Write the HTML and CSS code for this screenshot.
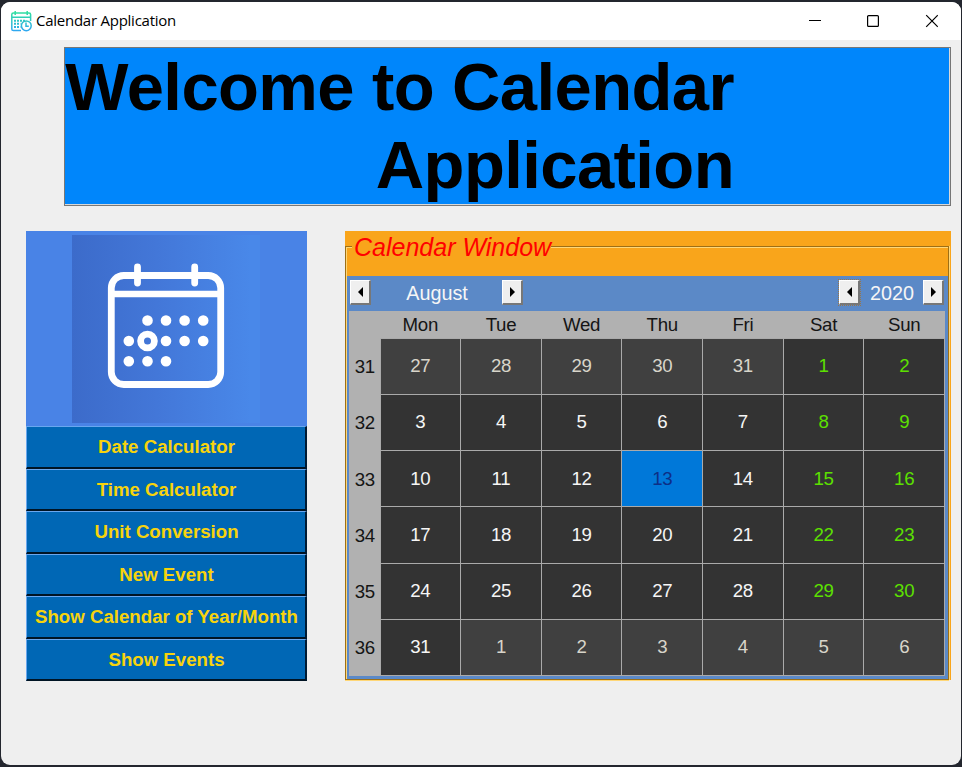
FILE: index.html
```html
<!DOCTYPE html>
<html lang="en">
<head>
<meta charset="utf-8">
<title>Calendar Application</title>
<link rel="stylesheet" href="styles.css">
</head>
<body>
<div class="window">
  <header class="titlebar">
    <svg class="app-icon" width="21" height="21" viewBox="0 0 21 21" fill="none">
      <defs><linearGradient id="mint" gradientUnits="userSpaceOnUse" x1="0" y1="0" x2="0" y2="21"><stop offset="0" stop-color="#2fe39a"/><stop offset="1" stop-color="#2fa4f6"/></linearGradient></defs>
      <g stroke="url(#mint)" stroke-width="1.5">
        <path d="M10 19.6H2.4Q.8 19.6.8 18V3.6Q.8 2 2.4 2H18Q19.6 2 19.6 3.6V10"/>
        <path d="M.8 6.2H19.6M4.2 0V4M16.2 0V4"/>
        <circle cx="15.3" cy="14.8" r="4.9"/>
        <path d="M15 11.6V15.2H17.8"/>
        <path stroke-width="2" stroke-dasharray="2 1" d="M3 9.7H14.5M3 12.8H9.4M3 15.9H9.4"/>
      </g>
    </svg>
    <span class="title">Calendar Application</span>
    <svg class="controls" width="130" height="16" viewBox="0 0 130 16" fill="none" stroke="#000" stroke-width="1.2">
      <path d="M1 7.5H13"/><rect x="59.6" y="2.6" width="10.8" height="10.8" rx="1"/><path d="M118.2 2.2l11.6 11.6M129.8 2.2L118.2 13.8"/>
    </svg>
  </header>
  <main class="content">
    <h1 class="banner"><span>Welcome to Calendar<br>Application</span></h1>
    <div class="columns">
      <nav class="sidebar">
        <div class="picture">
          <div class="tile">
            <svg width="188" height="188" viewBox="0 0 188 188" fill="none" stroke="#fff">
              <rect x="39.3" y="40.5" width="109.4" height="109" rx="12.5" stroke-width="6.8"/>
              <path stroke-width="6.6" d="M40 59H148"/>
              <path stroke-width="6.8" stroke-linecap="round" d="M65.5 32V48M122.7 32V48"/>
              <path stroke-width="10.6" stroke-linecap="round" d="M75.5 85.5h.01M94 85.5h.01M112.6 85.5h.01M131.2 85.5h.01M56.8 106h.01M94 106h.01M112.6 106h.01M131.2 106h.01M56.8 126.2h.01M75.5 126.2h.01M94 126.2h.01"/>
              <circle cx="75.5" cy="106" r="6.9" stroke-width="6.8"/>
            </svg>
          </div>
        </div>
        <button>Date Calculator</button>
        <button>Time Calculator</button>
        <button>Unit Conversion</button>
        <button>New Event</button>
        <button>Show Calendar of Year/Month</button>
        <button>Show Events</button>
      </nav>
      <section class="frame">
        <h2 class="legend"><span>Calendar Window</span></h2>
        <div class="well">
          <div class="calendar">
            <div class="picker">
              <button class="step left" aria-label="Previous month"></button>
              <span class="month">August</span>
              <button class="step right" aria-label="Next month"></button>
              <span class="space"></span>
              <button class="step left focus" aria-label="Previous year"></button>
              <span class="year">2020</span>
              <button class="step right" aria-label="Next year"></button>
            </div>
            <table class="grid">
              <colgroup><col class="weeks"><col><col><col><col><col><col><col></colgroup>
              <thead><tr><th></th><th>Mon</th><th>Tue</th><th>Wed</th><th>Thu</th><th>Fri</th><th>Sat</th><th>Sun</th></tr></thead>
              <tbody>
                <tr><th>31</th><td class="out">27</td><td class="out">28</td><td class="out">29</td><td class="out">30</td><td class="out">31</td><td class="off">1</td><td class="off">2</td></tr>
                <tr><th>32</th><td>3</td><td>4</td><td>5</td><td>6</td><td>7</td><td class="off">8</td><td class="off">9</td></tr>
                <tr><th>33</th><td>10</td><td>11</td><td>12</td><td class="today">13</td><td>14</td><td class="off">15</td><td class="off">16</td></tr>
                <tr><th>34</th><td>17</td><td>18</td><td>19</td><td>20</td><td>21</td><td class="off">22</td><td class="off">23</td></tr>
                <tr><th>35</th><td>24</td><td>25</td><td>26</td><td>27</td><td>28</td><td class="off">29</td><td class="off">30</td></tr>
                <tr><th>36</th><td>31</td><td class="out">1</td><td class="out">2</td><td class="out">3</td><td class="out">4</td><td class="out">5</td><td class="out">6</td></tr>
              </tbody>
            </table>
          </div>
        </div>
      </section>
    </div>
  </main>
</div>
</body>
</html>
```
FILE: styles.css
```css
* { box-sizing: border-box; }
body {
  margin: 0;
  height: 767px;
  padding: 2px 1px 2px;
  background: #23262e;
  font-family: "Liberation Sans", Arial, sans-serif;
  overflow: hidden;
}
.window {
  height: 763px;
  border-radius: 9px;
  overflow: hidden;
  background: #efefef;
}
.titlebar {
  height: 38px;
  background: #fff;
  display: flex;
  align-items: center;
  padding: 0 23px 0 10px;
}
.title {
  margin: -2px 0 0 4px;
  font: 15px/20px "Open Sans", "Noto Sans", sans-serif;
  letter-spacing: -0.25px;
  color: #000;
}
.controls { margin-left: auto; }
.content { padding: 7px 10px 0 25px; }
.banner {
  margin: 0 0 25px 38px;
  width: 887px;
  height: 159px;
  border: 1px solid #777;
  box-shadow: inset -1px -1px #d8d8d8;
  background: #0086fb;
  font-weight: bold;
  font-size: 67px;
  letter-spacing: -0.6px;
  line-height: 77.5px;
  color: #000;
}
.banner span { display: block; width: 669px; text-align: right; white-space: nowrap; }
.columns { display: flex; align-items: flex-start; }
.sidebar {
  width: 281px;
  height: 450px;
  display: grid;
  grid-template-rows: 195px repeat(6, 42.5px);
}
.picture { background: #4983e6; padding: 4px 46px; }
.tile { width: 188px; height: 188px; background: linear-gradient(90deg, #3c6bca, #4377d8 45%, #4988e9 95%); }
.tile svg { display: block; }
.sidebar button {
  margin: 0;
  padding: 1px 0 0 1px;
  border: solid;
  border-width: 1px 2px 2px 1px;
  border-color: #69a7ef #001b33 #001424 #69a7ef;
  background: #0067b5;
  color: #f7d30c;
  font: bold 18.67px/20px "Liberation Sans", Arial, sans-serif;
  white-space: nowrap;
}
.frame {
  margin-left: 38px;
  width: 606px;
  height: 450px;
  background: linear-gradient(#f9a51b, #f9a51b) 0 0 / 606px 449px no-repeat;
  padding-top: 15px;
}
.well {
  width: 604px;
  height: 434px;
  border: 1px solid #9d6f16;
  box-shadow: inset 1px 1px #ffd777, 0 1px #ffd777, 1px 0 #ffd777;
  padding: 29px 0 0 1px;
}
.legend {
  margin: -15px 0 -15px 7px;
  height: 30px;
  font: italic 25px/32px "Liberation Sans", Arial, sans-serif;
  color: #f00;
  position: relative;
}
.legend span { background: #f9a51b; padding: 0 0 0 2px; display: inline-block; height: 30px; }
.calendar { width: 601px; height: 403px; background: #5b89c7; padding: 0 3px 3px 2px; }
.picker { height: 35px; display: flex; align-items: center; color: #f6f6f6; font-size: 19.8px; padding: 0 1px; }
.month { width: 131px; text-align: center; padding-left: 1px; }
.year { width: 63px; text-align: center; padding-left: 1px; }
.space { flex: 1; }
.step {
  width: 21px;
  height: 25px;
  margin-top: -2px;
  padding: 0;
  border: solid;
  border-width: 1px 2px 2px 1px;
  border-color: #fff #777 #777 #fff;
  background: #efefef;
  display: flex;
  align-items: center;
  justify-content: center;
}
.step::before { content: ""; border: 5px solid transparent; }
.left::before { border-right-color: #000; border-left-width: 0; }
.right::before { border-left-color: #000; border-right-width: 0; }
.focus { outline: 1px dotted #98764a; }
.grid {
  width: 596px;
  height: 365px;
  table-layout: fixed;
  border-collapse: collapse;
  background: #b1b1b1;
  font-size: 18.67px;
  letter-spacing: -0.3px;
  line-height: 20px;
}
.weeks { width: 31px; }
.grid th, .grid td { padding: 0; text-align: center; vertical-align: middle; font-weight: normal; }
.grid thead tr { height: 27px; }
.grid thead th { padding: 2px 0 0; }
.grid tbody th { padding: 2px 0 0 1px; }
.grid th { color: #151515; }
.grid td { background: #333; color: #f6f6f6; border: 1px solid #aaa; }
.grid .out { background: #404040; color: #d8d5ca; }
.grid .off { color: #5ce000; }
.grid .today { background: #0078d9; color: #0d2f86; }
```
